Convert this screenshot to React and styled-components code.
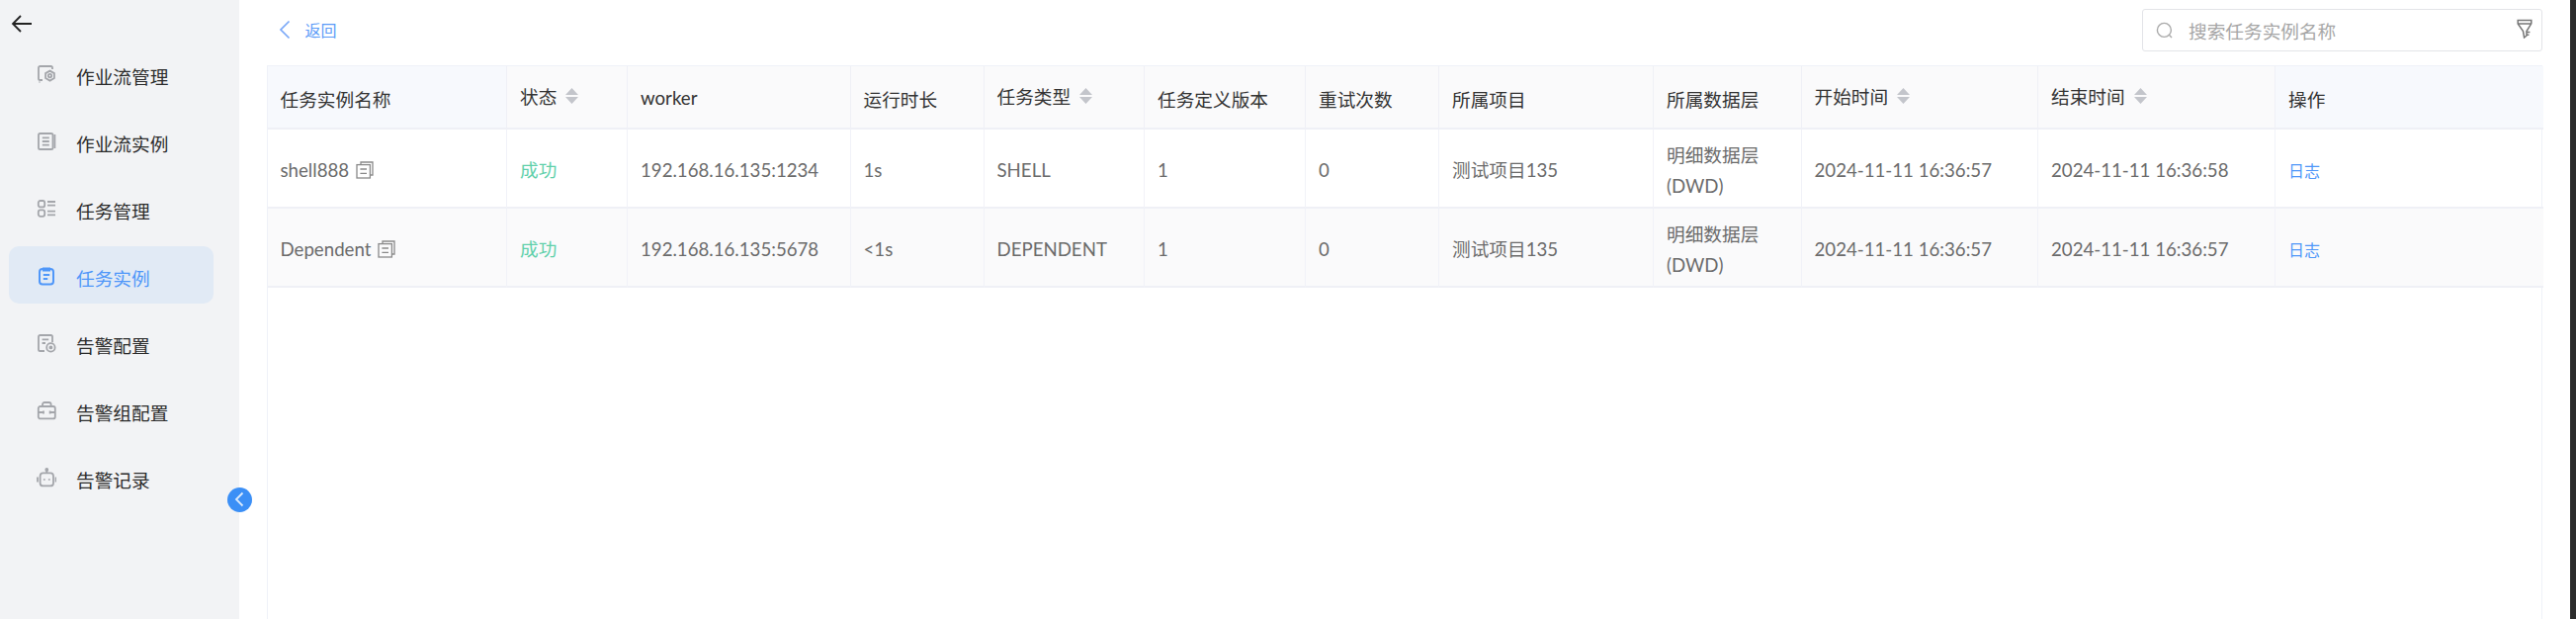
import styled, { createGlobalStyle } from "styled-components";

const GlobalStyle = createGlobalStyle`
  html, body {
    margin: 0;
    height: 100%;
    overflow: hidden;
    background: #fff;
  }
  #root {
    height: 100%;
  }
  * {
    box-sizing: border-box;
  }
`;

const NAV_GREY = "#a4a6ab";
const NAV_BLUE = "#4f97f9";

const icons = {
  flowManage: (
    <>
      <path d="M6 16H3.6A1.6 1.6 0 0 1 2 14.4V3.6A1.6 1.6 0 0 1 3.6 2h10.8A1.6 1.6 0 0 1 16 3.6V5" />
      <path d="M2.6 18h.8" />
      <path d="M13.5 6.6l4.4 2.5v5l-4.4 2.5-4.4-2.5v-5z" />
      <circle cx="13.5" cy="11.6" r="1.7" />
    </>
  ),
  flowInstance: (
    <>
      <rect x="2" y="2" width="14.5" height="16" rx="1.6" />
      <path d="M18.4 3v14M5.8 6.4h7M5.8 10h7M5.8 13.6h7" />
    </>
  ),
  taskManage: (
    <>
      <rect x="1.8" y="2" width="6.4" height="6.4" rx="2" />
      <rect x="1.8" y="11.4" width="6.4" height="6.4" rx="2" />
      <path d="M11 3h8M11 6.6h8M11 12.6h8M11 16.4h8" />
    </>
  ),
  taskInstance: (
    <>
      <rect x="3" y="3" width="14" height="15.4" rx="3" />
      <path d="M7 2.4h6v2.2H7z" fill="currentColor" />
      <path d="M6.8 9h6.4M6.8 13h4.4" />
    </>
  ),
  alertConfig: (
    <>
      <path d="M8 18H3.6A1.6 1.6 0 0 1 2 16.4V3.6A1.6 1.6 0 0 1 3.6 2h10.8A1.6 1.6 0 0 1 16 3.6V9" />
      <path d="M5.6 6.4h6.6M5.6 10h3.4" />
      <circle cx="14.4" cy="14.4" r="4.2" />
      <circle cx="14.4" cy="14.4" r="1" fill="currentColor" />
    </>
  ),
  alertGroup: (
    <>
      <rect x="1.8" y="6" width="17" height="12.4" rx="2" />
      <path d="M6 6V4a2 2 0 0 1 2-2h4.6a2 2 0 0 1 2 2v2" />
      <path d="M1.8 12h5M13.8 12h5M7 10.6v2.8M13.6 10.6v2.8" />
    </>
  ),
  alertLog: (
    <>
      <rect x="3.6" y="5.4" width="13.4" height="13" rx="3" />
      <circle cx="10.3" cy="2" r="1" fill="currentColor" />
      <path d="M10.3 2.6v2.8M1 9.6v5M19.6 9.6v5M7.8 11.2v1.6M12.8 11.2v1.6" />
    </>
  ),
};

const navItems = [
  { key: "flowManage", label: "作业流管理" },
  { key: "flowInstance", label: "作业流实例" },
  { key: "taskManage", label: "任务管理" },
  { key: "taskInstance", label: "任务实例", active: true },
  { key: "alertConfig", label: "告警配置" },
  { key: "alertGroup", label: "告警组配置" },
  { key: "alertLog", label: "告警记录" },
];

const columns = [
  { title: "任务实例名称", width: 242.5, fixed: true },
  { title: "状态", width: 122, sort: true },
  { title: "worker", width: 225.5 },
  { title: "运行时长", width: 135 },
  { title: "任务类型", width: 162.5, sort: true },
  { title: "任务定义版本", width: 163 },
  { title: "重试次数", width: 135 },
  { title: "所属项目", width: 217 },
  { title: "所属数据层", width: 149.5 },
  { title: "开始时间", width: 239.5, sort: true },
  { title: "结束时间", width: 240, sort: true },
  { title: "操作", width: 271, fixed: true },
];

const rows = [
  {
    name: "shell888",
    worker: "192.168.16.135:1234",
    duration: "1s",
    type: "SHELL",
    start: "2024-11-11 16:36:57",
    end: "2024-11-11 16:36:58",
  },
  {
    name: "Dependent",
    worker: "192.168.16.135:5678",
    duration: "<1s",
    type: "DEPENDENT",
    start: "2024-11-11 16:36:57",
    end: "2024-11-11 16:36:57",
  },
];

export default function App() {
  return (
    <Page>
      <GlobalStyle />
      <Sidebar>
        <BackArrow viewBox="0 0 22 20" aria-hidden="true">
          <path d="M21 10H2M10 2l-8 8 8 8" />
        </BackArrow>
        <Nav>
          {navItems.map((item) => (
            <NavItem key={item.key} $active={item.active}>
              <NavIcon viewBox="0 0 20 20" aria-hidden="true">
                {icons[item.key]}
              </NavIcon>
              {item.label}
            </NavItem>
          ))}
        </Nav>
        <Collapse>
          <svg width="12" height="16" viewBox="0 0 12 16" aria-hidden="true">
            <path d="M9.5 1.5L3 8l6.5 6.5" />
          </svg>
        </Collapse>
      </Sidebar>
      <Main>
        <TopBar>
          <BackLink>
            <svg width="12" height="20" viewBox="0 0 12 20" aria-hidden="true">
              <path d="M10.5 1.5L2 10l8.5 8.5" />
            </svg>
            <span>返回</span>
          </BackLink>
          <Search>
            <SearchIcon viewBox="0 0 18 18" aria-hidden="true">
              <circle cx="8.4" cy="8.4" r="7" />
              <path d="M13.6 13.6l2.4 2.4" />
            </SearchIcon>
            <Placeholder>搜索任务实例名称</Placeholder>
            <FilterIcon viewBox="0 0 16 20" aria-hidden="true">
              <path d="M1.2 1.5h13.6v3.4L10 12.5V17l-2.4 2-1.1-6.5-5.3-7.6z" />
              <path d="M1.2 4.9h13.6M10 13.6h3.4M10 16.2h2.4" />
            </FilterIcon>
          </Search>
        </TopBar>
        <TableWrap>
          <Table>
            <colgroup>
              {columns.map((c) => (
                <Col key={c.title} $width={c.width} />
              ))}
            </colgroup>
            <thead>
              <tr>
                {columns.map((c) => (
                  <Th key={c.title} $fixed={c.fixed}>
                    {c.sort ? (
                      <SortLabel>
                        {c.title}
                        <SortIcon viewBox="0 0 13 16" aria-hidden="true">
                          <path d="M6.5 0l6.5 7H0zM6.5 16L0 9h13z" />
                        </SortIcon>
                      </SortLabel>
                    ) : (
                      c.title
                    )}
                  </Th>
                ))}
              </tr>
            </thead>
            <tbody>
              {rows.map((r) => (
                <Row key={r.name}>
                  <Td>
                    {r.name}
                    <CopyIcon viewBox="0 0 18 18" aria-hidden="true">
                      <path d="M5 3.4V1h12v13h-2.4" />
                      <rect x="1" y="3.6" width="13.4" height="13.4" />
                      <path d="M4.4 8h6.6M4.4 12.4h6.6" />
                    </CopyIcon>
                  </Td>
                  <Td>
                    <Success>成功</Success>
                  </Td>
                  <Td>{r.worker}</Td>
                  <Td>{r.duration}</Td>
                  <Td>{r.type}</Td>
                  <Td>1</Td>
                  <Td>0</Td>
                  <Td>测试项目135</Td>
                  <Td>明细数据层(DWD)</Td>
                  <Td>{r.start}</Td>
                  <Td>{r.end}</Td>
                  <Td>
                    <LogLink>日志</LogLink>
                  </Td>
                </Row>
              ))}
            </tbody>
          </Table>
        </TableWrap>
      </Main>
      <EdgeStrip />
    </Page>
  );
}

const Page = styled.div`
  display: flex;
  height: 100vh;
  overflow: hidden;
  font-family: Lato, "Noto Sans CJK SC", sans-serif;
  font-size: 18.67px;
  color: #333;
`;

const Sidebar = styled.aside`
  position: relative;
  flex: 0 0 242px;
  padding: 14px 26px 0 9px;
  background: #f2f3f5;
`;

const BackArrow = styled.svg`
  display: block;
  width: 22px;
  height: 20px;
  margin-left: 2px;
  fill: none;
  stroke: #222;
  stroke-width: 1.8;
`;

const Nav = styled.nav`
  display: flex;
  flex-direction: column;
  gap: 10px;
  margin-top: 11px;
`;

const NavItem = styled.div`
  display: flex;
  align-items: center;
  gap: 20px;
  height: 58px;
  padding: 5px 0 0 28px;
  border-radius: 10px;
  color: ${(p) => (p.$active ? NAV_BLUE : "#2b2b2b")};
  background: ${(p) => (p.$active ? "#e1eaf5" : "transparent")};
`;

const NavIcon = styled.svg`
  flex: none;
  width: 20px;
  height: 20px;
  margin-top: -3px;
  fill: none;
  stroke: currentColor;
  stroke-width: 1.8;
  color: ${NAV_GREY};
  ${NavItem}:nth-child(4) & {
    color: ${NAV_BLUE};
    stroke-width: 2;
  }
`;

const Collapse = styled.div`
  position: absolute;
  top: 492.5px;
  right: -12.5px;
  display: flex;
  align-items: center;
  justify-content: center;
  width: 25px;
  height: 25px;
  border-radius: 50%;
  background: #3b8ff6;
  path {
    fill: none;
    stroke: #dcebfd;
    stroke-width: 1.8;
  }
`;

const Main = styled.main`
  flex: 1;
  display: flex;
  flex-direction: column;
  min-width: 0;
  padding: 9px 28px 0 27.5px;
`;

const TopBar = styled.div`
  display: flex;
  align-items: center;
  justify-content: space-between;
  flex: none;
  height: 43px;
  margin-bottom: 14px;
`;

const BackLink = styled.div`
  display: flex;
  align-items: center;
  gap: 15px;
  padding: 0 0 2px 12px;
  font-size: 16px;
  color: #5b9bf8;
  path {
    fill: none;
    stroke: #7aa8f8;
    stroke-width: 1.7;
  }
`;

const Search = styled.div`
  display: flex;
  align-items: center;
  width: 405px;
  height: 43px;
  padding: 0 9px 0 13px;
  border: 1.5px solid #e3e4e8;
  border-radius: 3px;
`;

const SearchIcon = styled.svg`
  flex: none;
  width: 18px;
  height: 18px;
  fill: none;
  stroke: #a9a9a9;
  stroke-width: 1.4;
`;

const Placeholder = styled.span`
  flex: 1;
  margin-left: 15px;
  color: #a6a6a6;
`;

const FilterIcon = styled.svg`
  flex: none;
  width: 16px;
  height: 20px;
  margin-top: -4px;
  fill: none;
  stroke: #777;
  stroke-width: 1.5;
`;

const TableWrap = styled.div`
  flex: 1;
  border: 1.5px solid #eff1f8;
  border-bottom: none;
`;

const Table = styled.table`
  width: 100%;
  table-layout: fixed;
  border-collapse: separate;
  border-spacing: 0;
`;

const Col = styled.col`
  width: ${(p) => p.$width}px;
`;

const Th = styled.th`
  height: 64px;
  padding: 2px 13px 0;
  text-align: left;
  font-weight: 400;
  color: #333;
  background: ${(p) => (p.$fixed ? "#f7f9fd" : "#fafafb")};
  border-right: 1.5px solid #eff0f6;
  border-bottom: 2px solid #eff0f6;
  &:last-child {
    border-right: none;
  }
`;

const SortLabel = styled.span`
  display: inline-flex;
  align-items: center;
  gap: 9px;
  margin-top: -8px;
  vertical-align: middle;
`;

const SortIcon = styled.svg`
  width: 13px;
  height: 16px;
  fill: #c3c5cb;
`;

const Row = styled.tr`
  &:nth-child(even) td {
    background: #fafafb;
  }
`;

const Td = styled.td`
  height: 80px;
  padding: 5px 13px 0;
  line-height: 31px;
  color: #6b6b6b;
  border-right: 1.5px solid #f1f2f8;
  border-bottom: 2px solid #eff0f6;
  &:last-child {
    border-right: none;
  }
`;

const CopyIcon = styled.svg`
  width: 18px;
  height: 18px;
  margin-left: 7px;
  vertical-align: -2px;
  fill: none;
  stroke: #8a8a8a;
  stroke-width: 1.3;
`;

const Success = styled.span`
  color: #5fd0aa;
`;

const LogLink = styled.span`
  font-size: 16px;
  color: #4f97f9;
`;

const EdgeStrip = styled.div`
  flex: 0 0 6px;
  background: #2c2c2c;
`;
